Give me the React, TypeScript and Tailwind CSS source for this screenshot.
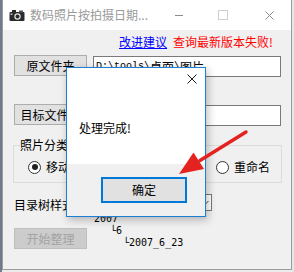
import React from 'react'

const CJK = { fontFamily: '"Noto Sans CJK SC", "Noto Sans", sans-serif' }
const MONO = { fontFamily: '"Liberation Mono", "Noto Sans CJK SC", monospace' }
const TREE = { fontFamily: '"DejaVu Sans Mono", "Liberation Mono", monospace' }

function CameraIcon() {
  return (
    <svg width="16" height="13" viewBox="0 0 16 13">
      <rect x="0.5" y="3" width="15" height="9" rx="1" fill="#2a2a2a" />
      <rect x="3" y="1" width="4" height="3" fill="#2a2a2a" />
      <rect x="10" y="1.5" width="4" height="2" fill="#555" />
      <circle cx="8.5" cy="7.5" r="3.2" fill="#e6e6e6" />
      <circle cx="8.5" cy="7.5" r="2" fill="#2a2a2a" />
      <rect x="1.5" y="4.5" width="2" height="1.5" fill="#bbb" />
    </svg>
  )
}

function Radio({ checked }: { checked?: boolean }) {
  return (
    <div className="w-[13px] h-[13px] rounded-full border border-[#333] bg-white flex items-center justify-center shrink-0">
      {checked && <div className="w-[6px] h-[6px] rounded-full bg-[#222]" />}
    </div>
  )
}

function WinButton({ children, disabled }: { children: React.ReactNode; disabled?: boolean }) {
  const look = disabled
    ? 'bg-[#cccccc] border-[#bfbfbf] text-[#a3a3a3]'
    : 'bg-[#e1e1e1] border-[#adadad] text-black'
  return (
    <div className={`w-[73px] h-[21px] border flex items-center justify-center text-[12px] leading-[14px] shrink-0 whitespace-nowrap ${look}`}>
      {children}
    </div>
  )
}

export default function App() {
  return (
    <div className="relative w-[294px] h-[272px] overflow-hidden bg-[#ececec] flex" style={CJK}>
      {/* desktop strip on the left */}
      <div className="w-[2px] h-full bg-[#6f7c8c]" />

      {/* main window */}
      <div className="w-[290px] h-[270px] flex flex-col border-x border-b border-[#9c9c9c] bg-[#f0f0f0]">
        {/* title bar */}
        <div className="h-[30px] bg-white flex items-center shrink-0">
          <div className="ml-[6px] mt-[1px]"><CameraIcon /></div>
          <span className="ml-[5px] text-[12px] leading-[14px] text-[#9a9a9a] whitespace-nowrap">数码照片按拍摄日期...</span>
          <div className="ml-auto flex items-center">
            <div className="w-[8px] h-px bg-[#8c8c8c] mr-[35px]" />
            <div className="w-[10px] h-[10px] border border-[#cfcfcf] mr-[37px]" />
            <svg width="9" height="9" viewBox="0 0 9 9" className="mr-[17px]">
              <path d="M0.5 0.5 L8.5 8.5 M8.5 0.5 L0.5 8.5" stroke="#8a8a8a" strokeWidth="1" />
            </svg>
          </div>
        </div>

        {/* body */}
        <div className="flex flex-col pl-[11px]">
          <div className="mt-[5px] h-[14px] flex justify-end pr-[18px] text-[12px] leading-[14px] whitespace-nowrap">
            <span className="text-[#0000ff] underline">改进建议</span>
            <span className="ml-[6px] text-[#ff0000]">查询最新版本失败!</span>
          </div>

          <div className="mt-[6px] flex items-start">
            <WinButton>原文件夹</WinButton>
            <div className="ml-[6px] mt-[1px] w-[188px] h-[21px] bg-white border border-[#7a7a7a] flex items-center pl-[2px] text-black whitespace-nowrap">
              <span className="text-[10px] leading-[14px]" style={MONO}>D:\tools\</span>
              <span className="text-[12px] leading-[14px]">桌面</span>
              <span className="text-[10px] leading-[14px]" style={MONO}>\</span>
              <span className="text-[12px] leading-[14px]">图片</span>
            </div>
          </div>

          <div className="mt-[27px] flex items-start">
            <WinButton>目标文件夹</WinButton>
            <div className="ml-[6px] mt-[1px] w-[188px] h-[21px] bg-white border border-[#7a7a7a]" />
          </div>

          <fieldset className="mt-[12px] -ml-px w-[269px] border border-[#dcdcdc] pb-[8px]">
            <legend className="ml-[6px] text-[12px] leading-[14px] text-black whitespace-nowrap">照片分类方式</legend>
            <div className="mt-[8px] flex items-center text-[12px] leading-[14px] text-black whitespace-nowrap">
              <div className="ml-[14px]"><Radio checked /></div>
              <span className="ml-[5px] w-[48px]">移动文件</span>
              <div className="ml-[122px]"><Radio /></div>
              <span className="ml-[5px]">重命名</span>
            </div>
          </fieldset>

          <div className="mt-[11px] flex items-center h-[17px]">
            <span className="text-[12px] leading-[14px] text-black mt-[4px] whitespace-nowrap">目录树样式:</span>
            <div className="ml-[8px] w-[127px] h-[17px] bg-white border border-[#7a7a7a] flex justify-end items-center pr-[2px]">
              <svg width="8" height="6" viewBox="0 0 8 6">
                <path d="M0.5 1 L4 4.5 L7.5 1" stroke="#444" fill="none" strokeWidth="1" />
              </svg>
            </div>
          </div>

          <div className="flex items-start">
            <div className="pt-[17px]">
              <WinButton disabled>开始整理</WinButton>
            </div>
            <div className="ml-[7px] pt-[2px] text-[10px] leading-[12px] text-black whitespace-nowrap" style={TREE}>
              <div>2007</div>
              <div className="pl-[16px]">└6</div>
              <div className="pl-[29px]">└2007_6_23</div>
            </div>
          </div>
        </div>
      </div>

      {/* desktop strip on the right */}
      <div className="w-[2px] h-full bg-[#e6e6e6]" />

      {/* message box */}
      <div className="absolute left-[66px] top-[67px] w-[140px] h-[150px] border border-[#1c7fd6] bg-[#f0f0f0] flex flex-col shadow-[2px_3px_8px_rgba(0,0,0,0.25)]">
        <div className="h-[96px] bg-white relative flex flex-col">
          <div className="flex justify-end pr-[8px] pt-[6px]">
            <svg width="10" height="10" viewBox="0 0 10 10">
              <path d="M0.5 0.5 L9.5 9.5 M9.5 0.5 L0.5 9.5" stroke="#1a1a1a" strokeWidth="1" />
            </svg>
          </div>
          <div className="mt-[37px] ml-[12px] text-[12px] leading-[14px] text-black whitespace-nowrap">处理完成!</div>
        </div>
        <div className="flex-1 flex justify-end items-start pr-[18px] pt-[13px]">
          <div className="w-[86px] h-[26px] bg-[#e1e1e1] border-2 border-[#0078d7] flex items-center justify-center text-[12px] leading-[14px] text-black">
            确定
          </div>
        </div>
      </div>

      {/* red annotation arrow */}
      <svg className="absolute left-0 top-0 pointer-events-none" width="294" height="272" viewBox="0 0 294 272">
        <line x1="246" y1="132" x2="200" y2="160.5" stroke="#e42320" strokeWidth="3.5" strokeLinecap="round" />
        <polygon points="179,174 193.5,152.5 204,169" fill="#e42320" />
      </svg>
    </div>
  )
}
